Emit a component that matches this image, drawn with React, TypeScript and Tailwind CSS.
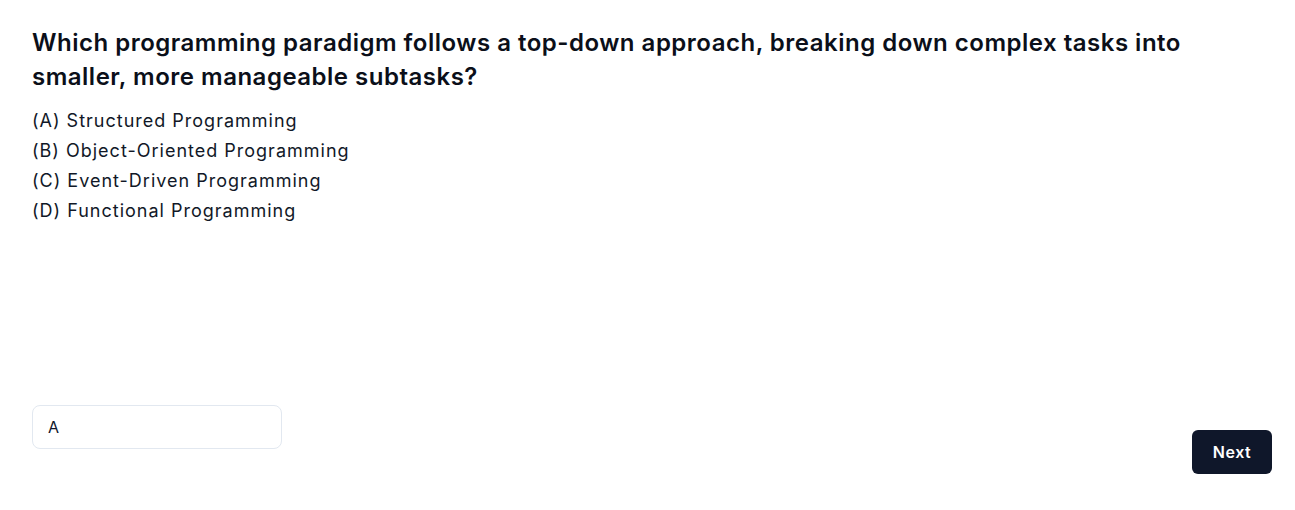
export default function App() {
  return (
    <div className="min-h-screen bg-white px-8 pt-[26px] font-['Inter',sans-serif] text-slate-900">
      <h1 className="max-w-[1200px] text-2xl font-semibold leading-[34px] tracking-[0.5px] text-[#0b0f19]">
        Which programming paradigm follows a top-down approach, breaking down complex tasks into smaller, more manageable subtasks?
      </h1>
      <ul className="mt-[12px] text-lg leading-[30px] tracking-[1px] text-[#111827]">
        <li>(A) Structured Programming</li>
        <li>(B) Object-Oriented Programming</li>
        <li>(C) Event-Driven Programming</li>
        <li>(D) Functional Programming</li>
      </ul>
      <div className="mt-[179px] flex items-start justify-between">
        <input
          type="text"
          defaultValue="A"
          className="h-11 w-[250px] rounded-lg border border-slate-200 bg-white px-[15px] text-base text-slate-900 outline-none"
        />
        <button className="mr-[-9px] mt-[25px] h-11 w-20 rounded-md bg-[#0f172a] text-base font-semibold tracking-[0.5px] text-white">
          Next
        </button>
      </div>
    </div>
  )
}
